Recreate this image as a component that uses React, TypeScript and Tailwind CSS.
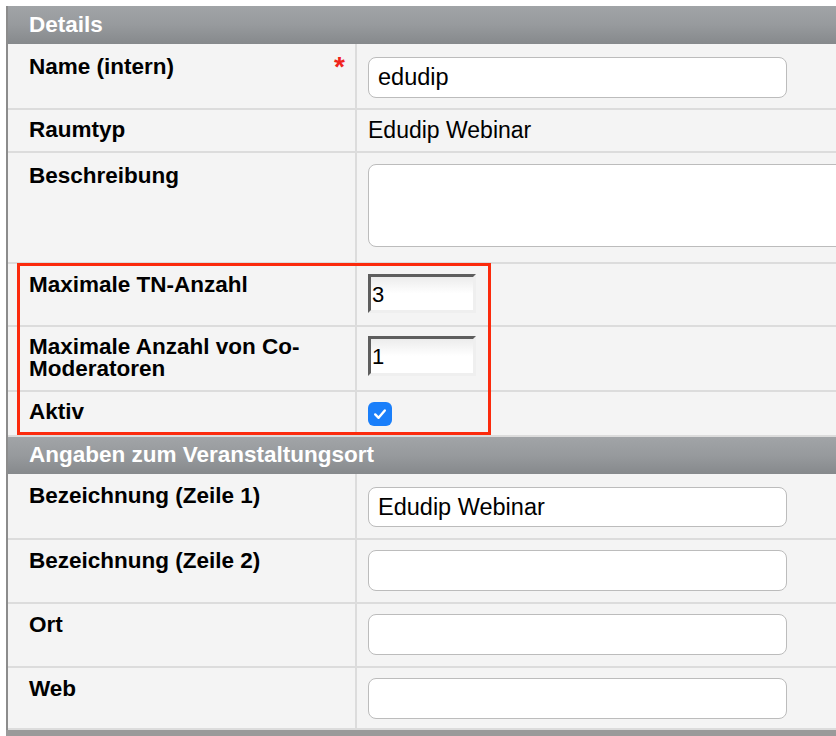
import React from "react";

type RowProps = {
  label: React.ReactNode;
  rowClass: string;
  labelClass: string;
  valueClass: string;
  star?: boolean;
  children?: React.ReactNode;
};

function Row({ label, rowClass, labelClass, valueClass, star, children }: RowProps) {
  return (
    <div className={`flex bg-[#f4f4f4] border-b-2 border-[#dcdcdc] ${rowClass}`}>
      <div className={`w-[347px] shrink-0 pl-[21px] pr-[10px] flex justify-between items-start ${labelClass}`}>
        <span className="font-bold text-[22.5px] leading-[22px] text-black">{label}</span>
        {star && (
          <span className="text-[#f0241c] font-bold text-[28px] leading-none -mt-[3px]">*</span>
        )}
      </div>
      <div className="w-[2px] shrink-0 bg-[#dcdcdc]" />
      <div className={`flex-1 pl-[11px] ${valueClass}`}>{children}</div>
    </div>
  );
}

function Header({ title, hClass }: { title: string; hClass: string }) {
  return (
    <div
      className={`flex items-center pl-[21px] bg-linear-to-b from-[#a1a4a7] via-[#979a9d] to-[#86898c] ${hClass}`}
    >
      <span className="text-white font-bold text-[22.5px] leading-none">{title}</span>
    </div>
  );
}

function TextInput({ value, hClass }: { value?: string; hClass: string }) {
  return (
    <input
      readOnly
      value={value ?? ""}
      className={`block w-[419px] rounded-[8px] border border-[#bcbcbc] bg-white px-[9px] text-[23.5px] text-black outline-none ${hClass}`}
    />
  );
}

function NumInput({ value, hClass }: { value: string; hClass: string }) {
  return (
    <input
      readOnly
      value={value}
      className={`block w-[108px] border-[3px] border-t-[#5e5e5e] border-l-[#5e5e5e] border-r-[#efefef] border-b-[#efefef] bg-linear-to-b from-[#ececec] via-white to-white px-[1px] pt-[2px] text-[22px] text-black outline-none ${hClass}`}
    />
  );
}

export default function App() {
  return (
    <div className="relative w-[836px] h-[736px] overflow-hidden bg-white font-['Liberation_Sans',Arial,sans-serif]">
      <div className="ml-[6px] mt-[6px] w-[900px] border-l-2 border-[#8c8c8c]">
        <Header title="Details" hClass="h-[38px]" />
        <Row label="Name (intern)" star rowClass="h-[66px]" labelClass="pt-[12px]" valueClass="pt-[13px]">
          <TextInput value="edudip" hClass="h-[41px]" />
        </Row>
        <Row label="Raumtyp" rowClass="h-[43px]" labelClass="pt-[9px]" valueClass="pt-[9px]">
          <span className="text-[23px] leading-[22px] text-black">Edudip Webinar</span>
        </Row>
        <Row label="Beschreibung" rowClass="h-[111px]" labelClass="pt-[12px]" valueClass="pt-[11px]">
          <textarea
            readOnly
            className="block w-[520px] h-[83px] resize-none rounded-[8px] border border-[#bcbcbc] bg-white outline-none"
          />
        </Row>
        <Row label="Maximale TN-Anzahl" rowClass="h-[63px]" labelClass="pt-[10px]" valueClass="pt-[10px]">
          <NumInput value="3" hClass="h-[39px]" />
        </Row>
        <Row
          label="Maximale Anzahl von Co-Moderatoren"
          rowClass="h-[65px]"
          labelClass="pt-[9px]"
          valueClass="pt-[9px]"
        >
          <NumInput value="1" hClass="h-[40px]" />
        </Row>
        <Row label="Aktiv" rowClass="h-[45px]" labelClass="pt-[9px]" valueClass="pt-[10px]">
          <div className="w-[24px] h-[24px] rounded-[6px] bg-[#1a7ffa] flex items-center justify-center">
            <svg width="16" height="16" viewBox="0 0 16 16" fill="none">
              <path d="M3.2 8.4 L6.6 11.8 L12.8 4.4" stroke="white" strokeWidth="2.4" strokeLinecap="round" strokeLinejoin="round" />
            </svg>
          </div>
        </Row>
        <Header title="Angaben zum Veranstaltungsort" hClass="h-[37px]" />
        <Row label="Bezeichnung (Zeile 1)" rowClass="h-[66px]" labelClass="pt-[11px]" valueClass="pt-[13px]">
          <TextInput value="Edudip Webinar" hClass="h-[40px]" />
        </Row>
        <Row label="Bezeichnung (Zeile 2)" rowClass="h-[64px]" labelClass="pt-[10px]" valueClass="pt-[10px]">
          <TextInput hClass="h-[41px]" />
        </Row>
        <Row label="Ort" rowClass="h-[64px]" labelClass="pt-[10px]" valueClass="pt-[10px]">
          <TextInput hClass="h-[41px]" />
        </Row>
        <Row label="Web" rowClass="h-[62px] border-b-0" labelClass="pt-[10px]" valueClass="pt-[10px]">
          <TextInput hClass="h-[41px]" />
        </Row>
      </div>
      <div className="ml-[6px] h-[6px] bg-[#9a9a9a]" />
      <div className="absolute left-[17px] top-[263px] w-[474px] h-[172px] border-[3px] border-[#fb2a0c] pointer-events-none" />
    </div>
  );
}
